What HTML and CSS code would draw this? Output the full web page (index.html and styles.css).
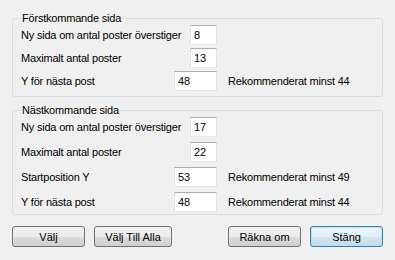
FILE: index.html
```html
<!DOCTYPE html>
<html lang="sv">
<head>
    <meta charset="UTF-8">
    <title>Sidinställningar</title>
    <link rel="stylesheet" href="styles.css">
</head>
<body>
    <div class="dialog">
        <fieldset class="group first">
            <legend>Förstkommande sida</legend>
            <div class="row">
                <label>Ny sida om antal poster överstiger</label>
                <input class="small" type="text" value="8">
                <span></span>
            </div>
            <div class="row">
                <label>Maximalt antal poster</label>
                <input class="small" type="text" value="13">
                <span></span>
            </div>
            <div class="row">
                <label>Y för nästa post</label>
                <input class="wide" type="text" value="48">
                <span class="hint">Rekommenderat minst 44</span>
            </div>
        </fieldset>

        <fieldset class="group second">
            <legend>Nästkommande sida</legend>
            <div class="row">
                <label>Ny sida om antal poster överstiger</label>
                <input class="small" type="text" value="17">
                <span></span>
            </div>
            <div class="row">
                <label>Maximalt antal poster</label>
                <input class="small" type="text" value="22">
                <span></span>
            </div>
            <div class="row">
                <label>Startposition Y</label>
                <input class="wide" type="text" value="53">
                <span class="hint">Rekommenderat minst 49</span>
            </div>
            <div class="row">
                <label>Y för nästa post</label>
                <input class="wide" type="text" value="48">
                <span class="hint">Rekommenderat minst 44</span>
            </div>
        </fieldset>

        <div class="buttons">
            <button class="btn">Välj</button>
            <button class="btn">Välj Till Alla</button>
            <span class="spacer"></span>
            <button class="btn">Räkna om</button>
            <button class="btn default">Stäng</button>
        </div>
    </div>
</body>
</html>
```

FILE: styles.css
```css
* {
    box-sizing: border-box;
}
body {
    margin: 0;
    background: #f0f0f0;
    font-family: "Liberation Sans", Arial, sans-serif;
    font-size: 11px;
    letter-spacing: -0.2px;
    color: #000;
}
.dialog {
    padding: 12px 12px 0 12px;
    width: 395px;
}
.group {
    margin: 0;
    border: 1px solid #d5dfe5;
    border-radius: 3px;
    padding: 0 8px 5px 8px;
    display: flex;
    flex-direction: column;
}
.group legend {
    padding: 0 1px;
    margin-left: 0;
    line-height: 13px;
}
.first {
    gap: 3px;
}
.second {
    margin-top: 7px;
    gap: 5px;
    padding-bottom: 2px;
}
.row {
    display: grid;
    grid-template-columns: 153px 43px auto;
    align-items: center;
}
.row label {
    white-space: nowrap;
}
.row input {
    justify-self: end;
    height: 20px;
    border: 1px solid #e2e3ea;
    border-top-color: #abadb3;
    border-bottom-color: #e3e9ef;
    background: #fff;
    font: inherit;
    padding: 0 3px;
    margin: 0;
}
.row input.small {
    width: 27px;
}
.row input.wide {
    width: 43px;
}
.hint {
    padding-left: 11px;
}
.buttons {
    display: flex;
    margin-top: 11px;
    gap: 9px;
}
.spacer {
    flex: 1;
}
.btn {
    width: 73px;
    height: 21px;
    font: inherit;
    color: #000;
    border: 1px solid #707070;
    border-radius: 3px;
    background: linear-gradient(#f2f2f2 0%, #ebebeb 50%, #dddddd 50%, #cfcfcf 100%);
    padding: 0;
}
.btn + .btn {
    width: 78px;
}
.buttons .spacer + .btn {
    width: 73px;
}
.btn.default {
    width: 73px;
    border-color: #3c7fb1;
    box-shadow: inset 0 0 0 1px #b5e2f7;
    background: linear-gradient(#eef6fb 0%, #e3eff7 50%, #d3e5f1 50%, #c6dcec 100%);
}
```
